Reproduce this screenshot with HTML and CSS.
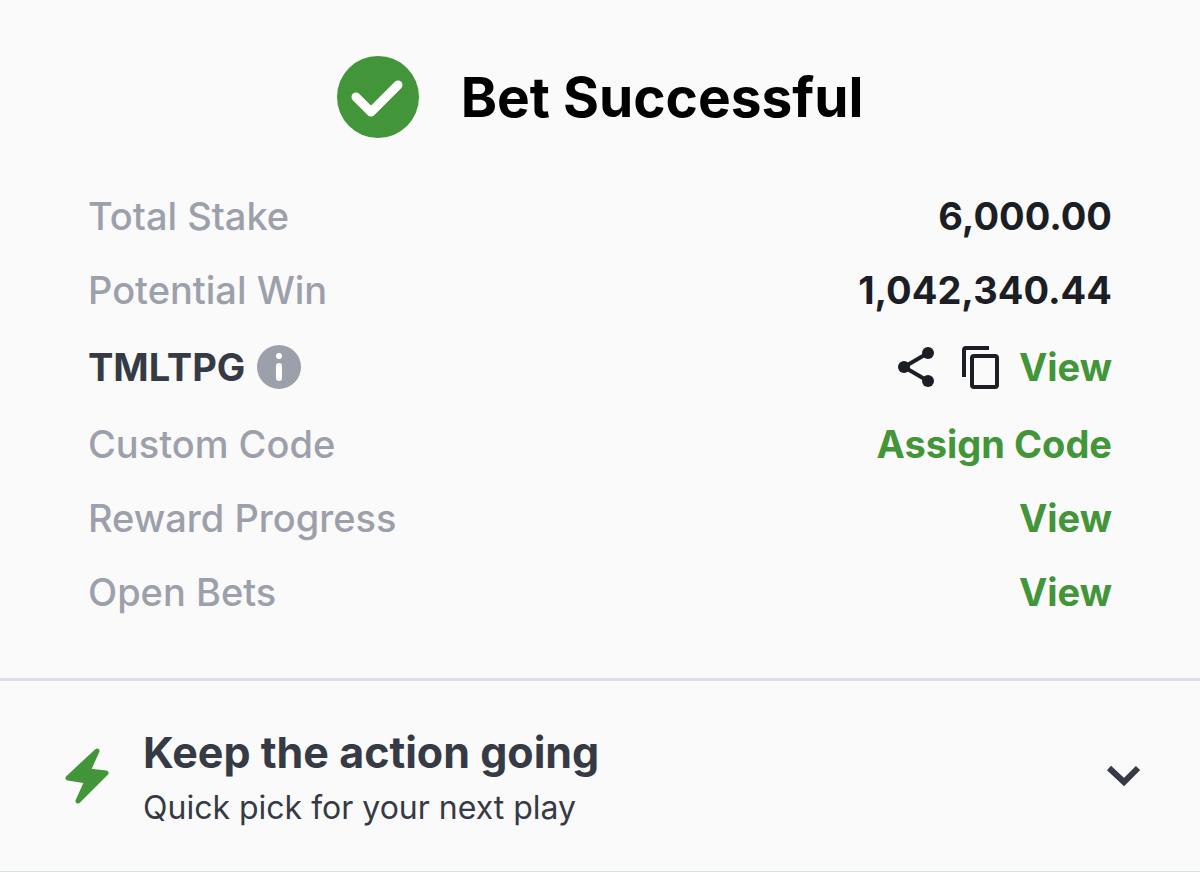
FILE: index.html
```
<!DOCTYPE html>
<html lang="en">
<head>
    <meta charset="UTF-8">
    <meta name="viewport" content="width=device-width, initial-scale=1.0">
    <title>Bet Successful</title>
    <link rel="stylesheet" href="styles.css">
</head>
<body>

<main class="bet-result">
    <header class="result-header">
        <svg class="success-icon" viewBox="0 0 82 82" aria-hidden="true">
            <circle cx="41" cy="41" r="41" fill="#439539"/>
            <path d="M19 41L34 56L61 29" fill="none" stroke="#fff" stroke-width="9" stroke-linecap="round" stroke-linejoin="round"/>
        </svg>
        <h1>Bet Successful</h1>
    </header>

    <div class="details">
        <div class="row">
            <span class="label">Total Stake</span>
            <span class="value">6,000.00</span>
        </div>
        <div class="row">
            <span class="label">Potential Win</span>
            <span class="value">1,042,340.44</span>
        </div>
        <div class="row row-code">
            <div class="code">
                <span>TMLTPG</span>
                <button class="icon-btn" type="button" aria-label="About booking code">
                    <svg class="info-icon" viewBox="0 0 44 44">
                        <circle cx="22" cy="22" r="22" fill="#9ca0ab"/>
                        <circle cx="22" cy="11" r="3" fill="#fff"/>
                        <path d="M22 21V33" stroke="#fff" stroke-width="6" stroke-linecap="round"/>
                    </svg>
                </button>
            </div>
            <div class="actions">
                <button class="icon-btn" type="button" aria-label="Share">
                    <svg class="share-icon" viewBox="0 0 38 42">
                        <path d="M31 7L7 21L31 35" fill="none" stroke="#1b1e25" stroke-width="4"/>
                        <circle cx="31" cy="7" r="6" fill="#1b1e25"/>
                        <circle cx="7" cy="21" r="6" fill="#1b1e25"/>
                        <circle cx="31" cy="35" r="6" fill="#1b1e25"/>
                    </svg>
                </button>
                <button class="icon-btn copy-btn" type="button" aria-label="Copy">
                    <svg class="copy-icon" viewBox="0 0 38 44" fill="none" stroke="#1b1e25" stroke-width="4">
                        <path d="M3 32V5Q3 3 5 3H28"/>
                        <rect x="11" y="11" width="25" height="31" rx="2"/>
                    </svg>
                </button>
                <a class="link" href="#">View</a>
            </div>
        </div>
        <div class="row">
            <span class="label">Custom Code</span>
            <a class="link" href="#">Assign Code</a>
        </div>
        <div class="row">
            <span class="label">Reward Progress</span>
            <a class="link" href="#">View</a>
        </div>
        <div class="row">
            <span class="label">Open Bets</span>
            <a class="link" href="#">View</a>
        </div>
    </div>

    <section class="quick-pick">
        <svg class="bolt-icon" viewBox="0 0 44 56" aria-hidden="true">
            <path d="M32 3L3 30L22 33L13 53L41 25L23 23Z" fill="#439539" stroke="#439539" stroke-width="5" stroke-linejoin="round"/>
        </svg>
        <div class="quick-text">
            <h2>Keep the action going</h2>
            <p>Quick pick for your next play</p>
        </div>
        <button class="icon-btn" type="button" aria-label="Expand">
            <svg class="chevron-icon" viewBox="0 0 34 22">
                <path d="M3 3L18 17L32 3" fill="none" stroke="#353a45" stroke-width="6"/>
            </svg>
        </button>
    </section>
</main>

</body>
</html>
```

FILE: styles.css
```
* {
    box-sizing: border-box;
}
body {
    background-color: #fafafa;
    color: #353a45;
    font-family: Inter, "Liberation Sans", sans-serif;
    margin: 0;
}
h1, h2, p {
    margin: 0;
}
svg {
    display: block;
}
.result-header {
    display: flex;
    justify-content: center;
    align-items: center;
    gap: 42px;
    padding: 56px 20px 55px;
}
.success-icon {
    width: 82px;
    height: 82px;
}
h1 {
    color: #000;
    font-size: 55px;
    font-weight: 700;
    line-height: 70px;
}
.details {
    display: flex;
    flex-direction: column;
    gap: 28px;
    padding: 0 88px 63px;
    font-size: 38px;
    line-height: 46px;
}
.row {
    display: flex;
    justify-content: space-between;
    align-items: center;
}
.row-code {
    min-height: 52px;
}
.label {
    color: #9ca0ab;
    font-weight: 500;
}
.value {
    color: #1b1e25;
    font-weight: 700;
}
.link {
    color: #439539;
    font-weight: 700;
    text-decoration: none;
}
.link:hover {
    text-decoration: underline;
}
.code {
    display: flex;
    align-items: center;
    gap: 12px;
    font-weight: 700;
}
.actions {
    display: flex;
    align-items: center;
    gap: 20px;
}
.copy-btn {
    margin-left: 6px;
}
.icon-btn {
    padding: 0;
    background: none;
    border: none;
    cursor: pointer;
}
.info-icon {
    width: 44px;
    height: 44px;
}
.share-icon {
    width: 38px;
    height: 42px;
}
.copy-icon {
    width: 38px;
    height: 44px;
}
.quick-pick {
    display: flex;
    align-items: center;
    gap: 34px;
    padding: 39px 60px 39px 65px;
    border-top: 3px solid #dcdee5;
    border-bottom: 1px solid #dcdee5;
}
.bolt-icon {
    width: 44px;
    height: 56px;
}
.quick-text {
    flex: 1;
}
h2 {
    font-size: 43px;
    font-weight: 700;
    line-height: 64px;
}
.quick-text p {
    font-size: 32px;
    line-height: 48px;
}
.chevron-icon {
    width: 34px;
    height: 22px;
}
```
